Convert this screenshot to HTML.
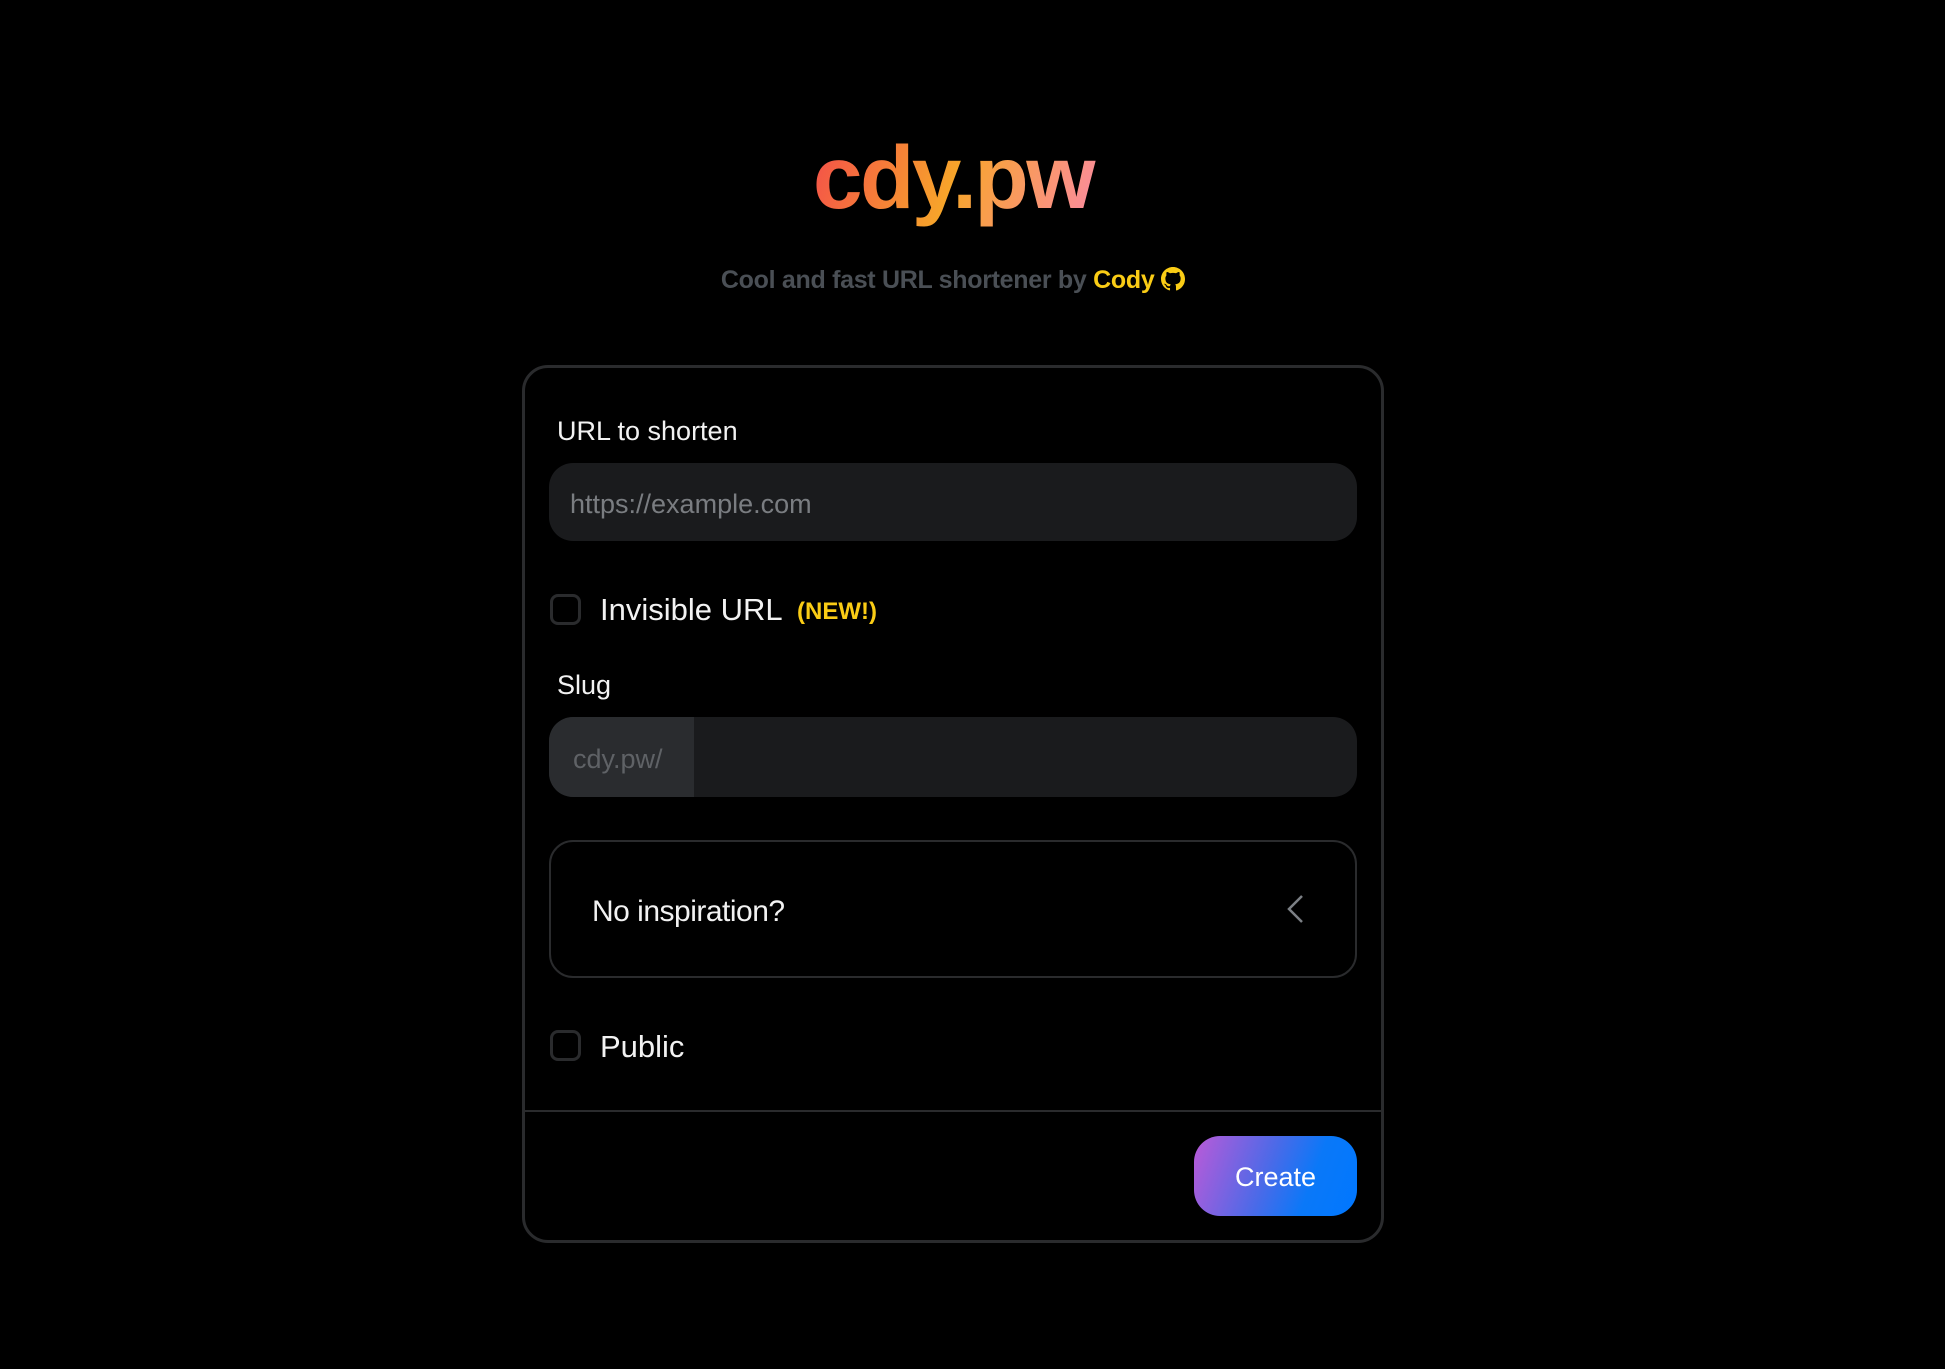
<!DOCTYPE html>
<html><head><meta charset="utf-8"><style>
html,body{margin:0;padding:0;background:#000;width:1945px;height:1369px;overflow:hidden;font-family:"Liberation Sans",sans-serif;}
.a{position:absolute;white-space:nowrap;}
.logow{left:0;width:1906px;text-align:center;top:133px;}
.logo{display:inline-block;font-size:89px;font-weight:bold;letter-spacing:-2.5px;line-height:1;
background:linear-gradient(110deg,#f44b4b 0%,#f7a52a 50%,#fb8aa5 100%);-webkit-background-clip:text;background-clip:text;color:transparent;padding:0 4px 8px;}
.sub{left:0;width:1906px;text-align:center;top:266px;font-size:25px;font-weight:bold;color:#4a4f55;letter-spacing:-0.3px;}
.sub b{color:#facc15}
.card{left:522px;top:365px;width:856px;height:872px;border:3px solid #2a2b2d;border-radius:26px;box-sizing:content-box}
.lbl{color:#f2f2f2;font-size:27px}
.inp{background:#1a1b1d;border-radius:24px}
.cb{width:25px;height:25px;border:3px solid #2a2b2d;border-radius:8px}
</style></head><body>
<div class="a logow"><span class="logo">cdy.pw</span></div>
<div class="a sub">Cool and fast URL shortener by <b>Cody</b> <svg width="24" height="24" viewBox="0 0 16 16" style="vertical-align:-3px"><path fill="#facc15" d="M8 0C3.580 0 0 3.580 0 8c0 3.54 2.29 6.530 5.470 7.590.4.07.55-.17.55-.38v-1.330c-2.230.48-2.7-1.070-2.7-1.070-.36-.92-.89-1.170-.89-1.170-.73-.5.05-.49.05-.49.8.06 1.230.83 1.230.83.72 1.220 1.870.87 2.330.66.07-.52.28-.87.51-1.070-1.780-.2-3.650-.89-3.650-3.950 0-.87.31-1.590.82-2.150-.08-.2-.36-1.020.08-2.120 0 0 .67-.21 2.200.82a7.600 7.600 0 0 1 4 0c1.530-1.040 2.200-.82 2.200-.82.44 1.100.16 1.920.08 2.120.51.56.82 1.270.82 2.150 0 3.070-1.870 3.750-3.650 3.950.29.25.54.73.54 1.480v2.200c0 .21.15.46.55.38A8.010 8.010 0 0 0 16 8c0-4.420-3.580-8-8-8z"/></svg></div>
<div class="a card"></div>
<div class="a lbl" style="left:557px;top:416px">URL to shorten</div>
<div class="a inp" style="left:549px;top:463px;width:808px;height:78px"></div>
<div class="a" style="left:570px;top:489px;font-size:27px;color:#7a7d81">https://example.com</div>
<div class="a cb" style="left:550px;top:594px"></div>
<div class="a" style="left:600px;top:592px;font-size:31px;color:#f2f2f2">Invisible URL</div>
<div class="a" style="left:797px;top:598px;font-size:24px;font-weight:bold;color:#facc15">(NEW!)</div>
<div class="a lbl" style="left:557px;top:670px">Slug</div>
<div class="a inp" style="left:549px;top:717px;width:808px;height:80px;overflow:hidden"><div style="position:absolute;left:0;top:0;width:145px;height:80px;background:#2a2c2f"></div></div>
<div class="a" style="left:573px;top:744px;font-size:27px;color:#5f6266">cdy.pw/</div>
<div class="a" style="left:549px;top:840px;width:804px;height:134px;border:2px solid #2a2b2d;border-radius:24px"></div>
<div class="a" style="left:592px;top:895px;font-size:30px;color:#f2f2f2;letter-spacing:-0.5px">No inspiration?</div>
<svg class="a" style="left:1284px;top:893px" width="24" height="32" viewBox="0 0 24 32"><path d="M18 3L5 16L18 29" fill="none" stroke="#7c8085" stroke-width="2.5"/></svg>
<div class="a cb" style="left:550px;top:1030px"></div>
<div class="a" style="left:600px;top:1029px;font-size:31px;color:#f2f2f2">Public</div>
<div class="a" style="left:525px;top:1110px;width:856px;height:2px;background:#2a2b2d"></div>
<div class="a" style="left:1194px;top:1136px;width:163px;height:80px;border-radius:26px;background:linear-gradient(110deg,#bb5ad8 0%,#4a6ae8 45%,#0a78f8 70%,#0077ff 100%);color:#fff;font-size:27px;text-align:center;line-height:82px">Create</div>
</body></html>
